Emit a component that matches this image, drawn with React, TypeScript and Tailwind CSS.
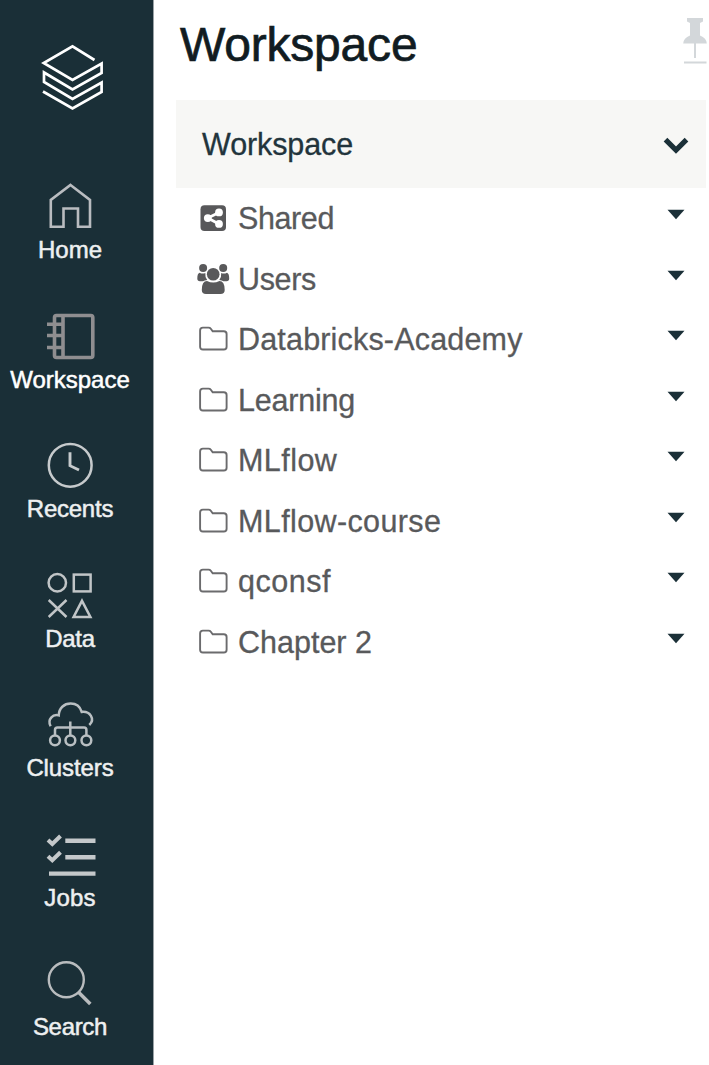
import type { ReactNode } from "react";

const navItems: { label: string; tracking: string; icon: ReactNode }[] = [
  {
    label: "Home",
    tracking: "tracking-normal",
    icon: (
      <path d="M35.5 4 L55 19 V45.7 H43 V27.5 H28.5 V45.7 H15.8 V19 Z" stroke="#b9bcc0" strokeWidth="2.6" />
    ),
  },
  {
    label: "Workspace",
    tracking: "tracking-normal",
    icon: (
      <g stroke="#8f8e90" strokeWidth="3.6">
        <rect x="19.500" y="4.500" width="38.300" height="42" rx="2" />
        <path d="M28 4 V46.5 M12 13.3 H28 M12 24.5 H28 M12 36.5 H28" />
      </g>
    ),
  },
  {
    label: "Recents",
    tracking: "tracking-[-0.25px]",
    icon: (
      <g stroke="#c6cacc" strokeWidth="2.5">
        <circle cx="35.2" cy="25.3" r="21.4" />
        <path d="M35 12.3 V25.7 L44 30" strokeWidth="2.9" />
      </g>
    ),
  },
  {
    label: "Data",
    tracking: "tracking-[-0.3px]",
    icon: (
      <g stroke="#c1c5c7" strokeWidth="2.5">
        <circle cx="22.3" cy="12.8" r="8.7" />
        <rect x="38.8" y="4.6" width="16.8" height="16.8" />
        <path d="M13.7 30 L31.5 47 M31.5 30 L13.7 47 M47 30.8 L55.4 47 H38.6 Z" />
      </g>
    ),
  },
  {
    label: "Clusters",
    tracking: "tracking-[-0.1px]",
    icon: (
      <g stroke="#b9bfc2" strokeWidth="2.5">
        <path d="M15.6 27.3 C12 20 18 15 23.7 16.4 C24 9 29 4.6 35.7 4.6 C41 4.6 45 7.5 46.7 12.9 C55 12 60.500 20 54.300 26" />
        <path d="M35.3 22.500 V36 M20 36 V31 Q20 28.500 22.500 28.500 H49 Q51.400 28.500 51.400 31 V36" />
        <circle cx="20" cy="41.300" r="4.900" />
        <circle cx="35.400" cy="41.300" r="4.900" />
        <circle cx="51.400" cy="41.300" r="4.900" />
      </g>
    ),
  },
  {
    label: "Jobs",
    tracking: "tracking-[0.2px]",
    icon: (
      <g stroke="#c4c8ca" strokeWidth="4.4">
        <path d="M30.300 11.800 H60.500 M30.300 28.200 H60.500 M14 44.600 H60.500" />
        <path d="M13 11 L17.300 15 L25.500 7 M13 27.300 L17.300 31.300 L25.500 23.300" strokeWidth="4" />
      </g>
    ),
  },
  {
    label: "Search",
    tracking: "tracking-[-0.3px]",
    icon: (
      <g stroke="#b9bcbe">
        <circle cx="31.300" cy="21.700" r="17.500" strokeWidth="2.400" />
        <path d="M43.800 34.500 L55.300 46" strokeWidth="3.500" />
      </g>
    ),
  },
];

function SharedIcon() {
  return (
    <svg viewBox="0 0 34 34" className="h-[34px] w-[34px] shrink-0">
      <rect x="4.500" y="4.300" width="25.500" height="25.600" rx="4" fill="#58585a" />
      <g fill="#fff">
        <circle cx="11.800" cy="17.100" r="3.900" />
        <circle cx="23" cy="11.400" r="3.900" />
        <circle cx="23" cy="22.900" r="3.900" />
      </g>
      <path d="M23 11.400 L11.800 17.100 L23 22.900" fill="none" stroke="#fff" strokeWidth="2.800" />
    </svg>
  );
}

function UsersIcon() {
  return (
    <svg viewBox="0 0 34 34" className="h-[34px] w-[34px] shrink-0" fill="#59595b">
      <circle cx="7.100" cy="5.900" r="4" />
      <circle cx="27.200" cy="5.900" r="4" />
      <path d="M3.500 10.700 Q6.500 12.300 9.300 11 Q8.900 15.500 11.200 18 Q8.500 18.300 7 19.300 H4 Q1.300 19.300 1.300 16.500 Q1.300 11.500 3.500 10.700 Z" />
      <path d="M31 10.700 Q28 12.300 25.200 11 Q25.600 15.500 23.300 18 Q26 18.300 27.500 19.300 H30.500 Q33.200 19.300 33.200 16.500 Q33.200 11.500 31 10.700 Z" />
      <circle cx="17.200" cy="12.200" r="6.300" />
      <path d="M11 19 Q17.200 22.200 23.400 19 Q28.700 19 28.700 28 Q28.700 32 24.500 32 H10 Q5.800 32 5.800 28 Q5.800 19 11 19 Z" />
    </svg>
  );
}

function FolderIcon() {
  return (
    <svg viewBox="0 0 34 34" className="h-[34px] w-[34px] shrink-0" fill="none" stroke="#6b6b6d" strokeWidth="1.900">
      <path d="M4.100 24.700 V8.400 Q4.100 5.600 6.900 5.600 H12.500 Q14 5.600 14.800 6.700 L16.700 9.300 H27.800 Q30.600 9.300 30.600 12.100 V24.700 Q30.600 27.500 27.800 27.500 H6.900 Q4.100 27.500 4.100 24.700 Z" />
    </svg>
  );
}

const entries: { name: string; tracking: string; icon: ReactNode }[] = [
  { name: "Shared", tracking: "tracking-[-0.4px]", icon: <SharedIcon /> },
  { name: "Users", tracking: "tracking-[-0.35px]", icon: <UsersIcon /> },
  { name: "Databricks-Academy", tracking: "tracking-[0.18px]", icon: <FolderIcon /> },
  { name: "Learning", tracking: "tracking-[-0.2px]", icon: <FolderIcon /> },
  { name: "MLflow", tracking: "tracking-[0.45px]", icon: <FolderIcon /> },
  { name: "MLflow-course", tracking: "tracking-[0.38px]", icon: <FolderIcon /> },
  { name: "qconsf", tracking: "tracking-[0.5px]", icon: <FolderIcon /> },
  { name: "Chapter 2", tracking: "tracking-normal", icon: <FolderIcon /> },
];

export default function App() {
  return (
    <div className="flex h-[1065px] w-[709px] overflow-hidden bg-white font-['Liberation_Sans',Arial,sans-serif]">
      <aside className="flex w-[154px] shrink-0 flex-col border-r border-[#9aa2a6] bg-[#1a2f37] pr-[13px]">
        <div className="flex h-[181px] shrink-0 justify-center pt-[42px] pl-[5px]">
          <svg viewBox="0 0 70 70" className="h-[70px] w-[70px]" fill="none" stroke="#fff" strokeWidth="2.700">
            <path d="M56.500 18 L34.500 4.300 L5.700 21 L34.500 38 L63.600 21.500 V31 L34.500 47.500 L6 30.500 V40 L34.500 57 L63.600 40.500 V50 L34.500 66.500 L5 49.500" />
          </svg>
        </div>
        <nav className="flex flex-col">
          {navItems.map((item) => (
            <a key={item.label} className="flex h-[129.5px] shrink-0 flex-col items-center">
              <svg viewBox="0 0 70 50" className="h-[50px] w-[70px] shrink-0" fill="none">
                {item.icon}
              </svg>
              <span
                className={`mt-[5px] text-[24px] leading-[28px] [-webkit-text-stroke:0.5px] ${item.tracking} ${
                  item.label === "Workspace" ? "text-white" : "text-[#eef0f1]"
                }`}
              >
                {item.label}
              </span>
            </a>
          ))}
        </nav>
      </aside>

      <main className="flex flex-1 flex-col pr-[3px] pl-[22px]">
        <header className="flex h-[100px] shrink-0 items-start justify-between pl-1">
          <h1 className="pt-[17px] text-[48px] leading-[55px] tracking-[-0.2px] text-[#111c22] [-webkit-text-stroke:0.7px]">
            Workspace
          </h1>
          <svg viewBox="0 0 26 50" className="mt-4 -mr-[2px] h-[50px] w-[26px]" fill="#d3d7da">
            <path d="M5 2 H21 V5.500 L18 7 V19.500 Q24.500 22 24.800 27.500 H1.200 Q1.500 22 8 19.500 V7 L5 5.500 Z" />
            <path d="M12 27 H14 V42 H12 Z M2 45.500 H24.500 V47.500 H2 Z" />
          </svg>
        </header>

        <section className="flex h-[88px] shrink-0 items-center justify-between bg-[#f7f7f5] pr-4 pl-[26px]">
          <h2 className="text-[30.5px] leading-[36px] tracking-[-0.1px] text-[#22343c] [-webkit-text-stroke:0.3px]">
            Workspace
          </h2>
          <svg viewBox="0 0 28 24" className="h-6 w-7" fill="none" stroke="#1b3038" strokeWidth="5.200">
            <path d="M3.500 7.700 L14 18 L24.500 7.700" />
          </svg>
        </section>

        <ul className="flex flex-col">
          {entries.map((entry) => (
            <li key={entry.name} className="flex h-[60.5px] shrink-0 items-center pr-[21.5px] pl-5">
              {entry.icon}
              <span
                className={`ml-2 flex-1 text-[30.5px] leading-[60px] text-[#58595b] [-webkit-text-stroke:0.3px] ${entry.tracking}`}
              >
                {entry.name}
              </span>
              <svg viewBox="0 0 18 18" className="h-[18px] w-[18px]" fill="#1b3038">
                <path d="M0.500 0.800 H17.500 L9 10.300 Z" />
              </svg>
            </li>
          ))}
        </ul>
      </main>
    </div>
  );
}
